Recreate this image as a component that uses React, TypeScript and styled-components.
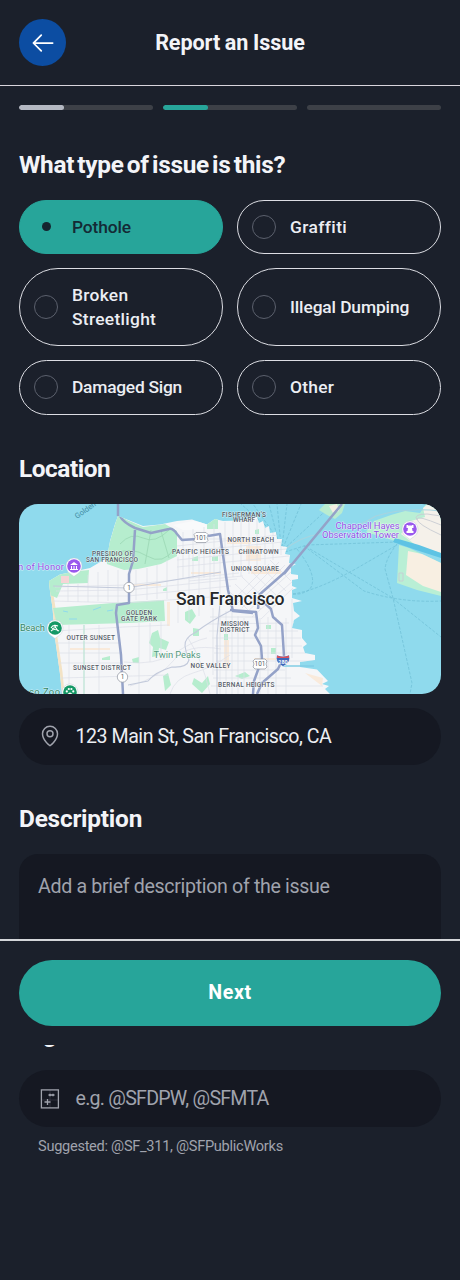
import React from "react";
import styled, { createGlobalStyle } from "styled-components";
import { PiArrowLeft, PiMapPin } from "react-icons/pi";

const Global = createGlobalStyle`
  * { box-sizing: border-box; }
  body { margin: 0; background: #1b202b; }
  button, input, textarea { font: inherit; }
`;

const Screen = styled.div`
  position: relative;
  display: flex;
  flex-direction: column;
  width: 460px;
  height: 1280px;
  overflow: hidden;
  background: #1b202b;
  color: #f3f4f8;
  font-family: Roboto, "Liberation Sans", sans-serif;
`;

const Header = styled.header`
  display: grid;
  grid-template-columns: 47px 1fr 47px;
  align-items: center;
  height: 86px;
  padding: 0 19px;
  border-bottom: 1px solid #d9d5dd;
`;

const BackButton = styled.button`
  display: grid;
  place-items: center;
  width: 47px;
  height: 47px;
  padding: 0;
  border: 0;
  border-radius: 50%;
  background: #0c4da2;
  color: #fff;
`;

const Title = styled.h1`
  margin: 0;
  text-align: center;
  font-size: 21.6px;
  line-height: 28px;
  font-weight: 700;
  letter-spacing: -0.1px;
  word-spacing: -0.5px;
`;

const Progress = styled.div`
  display: grid;
  grid-template-columns: repeat(3, 1fr);
  gap: 9.5px;
  padding: 19px 19px 0;
`;

const Track = styled.div`
  height: 5px;
  border-radius: 3px;
  background: #3d4047;
  overflow: hidden;
`;

const Fill = styled.div<{ $tone: string }>`
  width: 33.5%;
  height: 100%;
  border-radius: 3px;
  background: ${(p) => p.$tone};
`;

const Section = styled.section<{ $top: number }>`
  margin-top: ${(p) => p.$top}px;
  padding: 0 19px;
`;

const Heading = styled.h2<{ $track: number; $lift?: boolean }>`
  margin: 0;
  height: 30px;
  font-size: 24.4px;
  line-height: ${(p) => (p.$lift ? 27 : 29)}px;
  font-weight: 700;
  letter-spacing: ${(p) => p.$track}px;
  word-spacing: -2.5px;
  white-space: nowrap;
`;

const Options = styled.div`
  display: grid;
  grid-template-columns: 1fr 1fr;
  gap: 14px;
  margin-top: 19.7px;
`;

const Option = styled.label<{ $on?: boolean; $tall?: boolean }>`
  display: flex;
  align-items: center;
  gap: 14px;
  height: ${(p) => (p.$tall ? 78 : 54.5)}px;
  padding: 0 14px;
  border: 1.2px solid ${(p) => (p.$on ? "#27a59a" : "#dcdde3")};
  border-radius: 40px;
  background: ${(p) => (p.$on ? "#27a59a" : "transparent")};
  color: ${(p) => (p.$on ? "#142a35" : "#eceef3")};
`;

const Radio = styled.span<{ $on?: boolean }>`
  display: grid;
  place-items: center;
  flex: none;
  width: 24px;
  height: 24px;
  border: 1.2px solid ${(p) => (p.$on ? "transparent" : "#5b606d")};
  border-radius: 50%;
  &::after {
    content: "";
    width: 9px;
    height: 9px;
    border-radius: 50%;
    background: ${(p) => (p.$on ? "#15242f" : "transparent")};
  }
`;

const OptionText = styled.span<{ $track: number }>`
  padding-top: 1.6px;
  font-size: 17.4px;
  line-height: 23.8px;
  font-weight: 500;
  letter-spacing: ${(p) => p.$track}px;
`;

const MapFrame = styled.div`
  height: 189.5px;
  margin-top: 20px;
  border-radius: 19px;
  overflow: hidden;
  svg { display: block; }
`;

const Field = styled.div<{ $top: number }>`
  display: flex;
  align-items: center;
  gap: 13.5px;
  height: 57px;
  margin-top: ${(p) => p.$top}px;
  padding: 0 19px;
  border-radius: 29px;
  background: #151822;
`;

const FieldIcon = styled.span`
  display: grid;
  place-items: center;
  width: 24px;
  height: 24px;
  color: #a0a3ad;
`;

const FieldText = styled.span<{ $muted?: boolean; $track: number }>`
  padding-top: 1.6px;
  color: ${(p) => (p.$muted ? "#a0a3ad" : "#eceef2")};
  font-size: 19.6px;
  line-height: 26px;
  letter-spacing: ${(p) => p.$track}px;
  white-space: nowrap;
`;

const DescriptionBox = styled.div`
  height: 142px;
  margin-top: 20px;
  padding: 20px 19px;
  border-radius: 19px;
  background: #151822;
`;

const Hint = styled.p<{ $track: number }>`
  margin: 8.6px 19px 0;
  color: #a0a3ad;
  font-size: 14.6px;
  line-height: 20px;
  letter-spacing: ${(p) => p.$track}px;
  white-space: nowrap;
`;

const Footer = styled.footer`
  position: absolute;
  left: 0;
  right: 0;
  top: 939px;
  height: 106px;
  padding: 20px 19px 19px;
  border-top: 2px solid #d4d6da;
  background: #1b202b;
`;

const NextButton = styled.button`
  width: 100%;
  height: 66px;
  margin-top: -1px;
  padding: 0 0 1px;
  border: 0;
  border-radius: 33px;
  background: #27a59a;
  color: #fff;
  font-size: 19.6px;
  font-weight: 700;
  letter-spacing: 0.6px;
`;

const OPTIONS = [
  { text: "Pothole", track: -0.15, on: true },
  { text: "Graffiti", track: 0.4 },
  { text: "Broken Streetlight", track: 0.3, tall: true },
  { text: "Illegal Dumping", track: -0.12, tall: true },
  { text: "Damaged Sign", track: -0.25 },
  { text: "Other", track: 0.25 },
];

/* District labels: text, left edge, baseline, width. */
const DISTRICTS: [string, number, number, number][] = [
  ["PRESIDIO OF", 73, 52, 41],
  ["SAN FRANCISCO", 67, 58, 52],
  ["PACIFIC HEIGHTS", 153, 50, 57],
  ["FISHERMAN'S", 203, 12.5, 44],
  ["WHARF", 214, 18.3, 22],
  ["NORTH BEACH", 208.5, 37.5, 46.5],
  ["CHINATOWN", 219.5, 50, 40],
  ["UNION SQUARE", 212, 66.5, 48],
  ["GOLDEN", 107, 111, 26],
  ["GATE PARK", 102, 117, 36],
  ["OUTER SUNSET", 47.5, 136, 48.5],
  ["SUNSET DISTRICT", 54, 166, 58],
  ["NOE VALLEY", 171.5, 163.5, 40],
  ["MISSION", 202, 122, 27.5],
  ["DISTRICT", 201, 128, 29.5],
  ["BERNAL HEIGHTS", 199, 182.7, 56.5],
];

const LAND =
  "M43 190L41 170L36 134L33.5 104L31 87L30 77L41 70.5L71 64L88 54L91 37L96 20L99 12L108 15.5L124 22L141 20.5L158 17L173 15.5L188 20.5L196 15L204 17L221 16.5L234 14L238 13L240 19L244 17L246 24L250 22L251 29L257 28L258 35L263 35L262 42L268 43L266 50L271 51L270 59L277 60L272 63L272 70L279 71V75L273 76V82L278 84L273 86V94L283 97L274 99L275 107L281 112L275 116L273 124L283 126V134L288 140L284 143L286 149L296 151V156L281 158V163L298 165.5L309 177L303 180L310 182L306 185L311 190Z";

function Pin({ x, y, color, children }: { x: number; y: number; color: string; children: React.ReactNode }) {
  return (
    <g transform={`translate(${x} ${y})`}>
      <path d="M0 10.5C-2 8.5-8 6.5-8 0A8 8 0 0 1 8 0C8 6.5 2 8.5 0 10.5Z" fill="#fff" stroke="#b9bfcc" strokeWidth=".4" />
      <circle r="6.8" fill={color} />
      {children}
    </g>
  );
}

function CityMap() {
  return (
    <svg width="422" height="189.5" viewBox="0 0 422 189.5" fontFamily="Roboto, sans-serif">
      <defs>
        <clipPath id="land"><path d={LAND} /></clipPath>
      </defs>
      <rect width="422" height="190" fill="#8fdaed" />

      {/* ferry routes */}
      <g fill="none" stroke="#6fbfd6" strokeWidth=".7" strokeDasharray="3 1.6">
        <path d="M260 40L250 0M262 42L258 0M263 43L268 0M264 44L282 0M264 46L314 0M255 30L234 0M247 22L222 0" />
        <path d="M266 48L288 41L378 38M285 42L345 87Q382 99 422 97M291 45L372 93L422 133M274 90Q300 86 340 63L378 41M278 45Q301 74 290 86Q282 91 274 90M378 40Q367 54 366 65L374 94L393 179L391 190" />
      </g>

      {/* Yerba Buena and Treasure islands, east shore */}
      <path d="M300 6L306 0H326L323 9L316 15L308 11Z" fill="#b9ecd0" />
      <path d="M310 2L318 0L320 7L314 9Z" fill="#f3eee2" />
      <path d="M355 17L372 11L386 7L401 9L407 0H422V50L397 43L376 37L347 28Z" fill="#b9efd5" />
      <path d="M382 30L392 17L406 13L404 4L409 0H422V49L398 42Z" fill="#f5f1ea" />
      <path d="M380 41L390 44L422 59V92L398 86L378 79Z" fill="#b9efd5" />
      <path d="M389 47L403 50L422 59V88L404 82L387 71Z" fill="#f8efe2" />
      <path d="M376 34L400 41L422 49V54L397 46L374 38Z" fill="#5ec3e4" />
      <path d="M422 21Q398 11 398 15Q398 20 422 31M422 12L408 10Q394 10 398 16M380 69h4v8h-4z" fill="none" stroke="#c8ccd2" strokeWidth=".9" />
      <path d="M264 47Q282 32 302 30Q331 28 357 12Q386 3 422 7" fill="none" stroke="#a8d4df" strokeWidth="1.2" />

      <path d={LAND} fill="#f5f6f8" />
      <g clipPath="url(#land)">
        {/* beach */}
        <path d="M30 78L34 104L36 134L41 168L43 190" fill="none" stroke="#f3e3c5" strokeWidth="5" />

        {/* parks */}
        <g fill="#b6edce">
          <path d="M99 10L108 16L124 23L146 20L158 27V52L142 60L119 65L105 66L88 60L87 52L91 37Z" />
          <path d="M28 76L40 69L70 66L69 79L44 80L38 94L31 91Z" />
          <path d="M34 104L94 99L145 96L146 117L110 119L38 121Z" />
          <path d="M133 129l6-3 2 8 9 4-3 8-7-2-1 8-6 1 1-10-4-4zM166 108l7-3 4 7-6 8-5-4zM144 172l5-3 3 12-6 6zM174 124l6 1v7h-6zM144 85l4-2v4h-4zM83 154l8-2v4h-8zM113 155l7-2v6h-6zM216 172l10-4 5 4-8 3zM247 121h5v4h-5zM252 144h5v6h-5zM236 26l4-1v5h-4zM205 130h4v7h-4zM173 54l6-2v5h-6zM193 53l6-1v5h-6zM175 174l8 5 6-7 2 8-8 9-10-9z" />
          <path d="M188 14h11v11h-11z" />
        </g>
        <path d="M101 40Q112 28 124 34T150 26M96 50Q112 42 128 52T156 44M132 26L126 60M142 27L150 54" fill="none" stroke="#9bd7b4" strokeWidth=".8" />
        <path d="M44 107l5 1M74 106l8-3M88 107l6-1M50 115h8" fill="none" stroke="#8fdaed" strokeWidth="1" />
        <path d="M42 72h8v7h-8z" fill="#f5d5d6" />
        <path d="M154 21L174 17L188 19V26H164Z" fill="#f9fafb" />

        {/* warm commercial blocks */}
        <g fill="#f9eadb">
          <path d="M208 36h24v4h-24zM227 42h15v15h-15zM232 65h30v5h-30zM205 136h5v29h-5zM112 80h30v2h-30zM148 98h3v24h-3zM51 144h40v2H51zM274 118h7v6h-7zM286 169l18 5-1 8zM172 68h30v2h-30zM235 154h30v2h-30z" />
        </g>

        {/* minor streets */}
        <g fill="none" stroke="#dcdfe8" strokeWidth=".7">
          <path d="M36 83L108 81L220 69M37 87L109 86L218 75M39 92L109 92L212 82M34 97L107 99L220 91" />
          <path d="M49 80V98M59 80V98M69 71V98M79 68V97M89 66V97M99 66V98M117 66V96M128 64V96M138 61V95M148 56V95M159 53V119M170 49V117M180 47V112M191 44V102M201 42V101" />
          <path d="M36 127L105 123L150 121M37 139H102M39 149H102M41 159H103M42 174L150 171M50 121V190M80 121V190M120 119V190M131 119V158M142 118V150" />
          <path d="M160 35H207M158 42L260 31M158 48L264 38M158 56L267 45M158 63L270 52M170 77L224 72M164 28V74M174 25V74M185 23V74M195 20V73M206 18V74M214 17V73M222 16V72M230 15V70M238 15V67M246 23V61M254 29V56M262 38V51" />
          <path d="M214 96L250 60M218 100L260 58M223 104L266 61M228 108L272 68M233 113L274 77M242 115L274 84M210 87L233 110M216 80L242 105M223 73L250 99M232 67L258 92M241 62L267 87M251 56L272 77" />
          <path d="M194 104V171M201 105V190M207 107V190M213 108V190M219 112V190M225 114V190M241 114V190M249 113V190M257 113V190M267 114V190M273 95V154M191 113H238M189 120L270 119M190 127H279M193 134H282M196 142H283M195 149H287M197 157H295M195 166H266M194 174H272M192 182H304" />
          <path d="M105 158Q136 162 156 149T188 134M111 182Q142 173 155 156T202 145M151 190Q156 174 174 169T211 151M169 134Q184 157 191 190" />
        </g>
        <g fill="none" stroke="#c3cadb" strokeWidth="1.1">
          <path d="M34 82L108 84L202 68" />
          <path d="M211 107Q190 118 177 128Q165 134 166 142T170 156Q168 164 153 163Q136 168 129 177L109 181M201 99L198 132V190" />
        </g>
        <path d="M65 121V190" fill="none" stroke="#c2e6d8" strokeWidth="1.4" />

        {/* highways */}
        <g fill="none" stroke="#94a2c8" strokeWidth="2.5" strokeLinejoin="round">
          <path d="M99 0L100 10Q103 18 116 24L132 29L150 25Q154 24 158 30L163 36L178 35M189 32L201 30L209 86L214 107L234 109" />
          <path d="M116 26L114 57L110 70V99L98 101L97 109L102 151L104 190" />
          <path d="M240 91L265 69L323 0" />
          <path d="M211 106L237 108L239 124L236 131L242 142L243 155L235 177L234 190" />
          <path d="M239 105L240 94L252 105L254 113L263 121L265 152L259 165L243 179L238 190" />
        </g>
      </g>
      <path d="M99 0V12M265 70L323 0" fill="none" stroke="#94a2c8" strokeWidth="2.5" />
      <path d="M264 162H295" stroke="#80cde5" strokeWidth="1.7" />

      {/* route shields */}
      <g fill="#fff" stroke="#8e949f" strokeWidth=".7">
        <circle cx="110" cy="83.5" r="5.2" />
        <circle cx="103.5" cy="173" r="5.2" />
        <path d="M177 28.5h10l2 2-1 3 1 3-2 2h-10l-2-2 1-3-1-3z" />
        <path d="M236 155h10l2 2-1 3 1 3-2 2h-10l-2-2 1-3-1-3z" />
      </g>
      <path d="M258 151Q264 154 270 151Q273 158 264 162.5Q255 158 258 151Z" fill="#3c67ba" stroke="#fff" strokeWidth=".5" />
      <path d="M258 151.5Q264 154 270 151.5V154H258Z" fill="#d9525e" />
      <g fontSize="6.4" fill="#535963" textAnchor="middle">
        <text x="110" y="85.8">1</text>
        <text x="103.5" y="175.3">1</text>
        <text x="182" y="35.8">101</text>
        <text x="241" y="162.3">101</text>
        <text x="264" y="159.5" fill="#fff" fontSize="5.4" fontWeight="700">280</text>
      </g>

      <g fontSize="6.5" fontWeight="500" fill="#565c67" stroke="#fff" strokeWidth="1" strokeOpacity=".6" paintOrder="stroke" strokeLinejoin="round">
        {DISTRICTS.map(([label, x, y, width]) => (
          <text key={label} x={x} y={y} textLength={width}>{label}</text>
        ))}
      </g>

      <text x="157" y="101" textLength="108.5" fontSize="17.6" fontWeight="500" fill="#25282c" stroke="#fff" strokeWidth="1.2" paintOrder="stroke">San Francisco</text>

      <g fontSize="9.4" stroke="#fff" strokeWidth="1.2" strokeOpacity=".6" paintOrder="stroke" strokeLinejoin="round">
        <text x="134.5" y="153.5" textLength="47" fill="#559a7e">Twin Peaks</text>
        <text x="-1" y="65.5" textLength="46" fill="#9650e8">n of Honor</text>
        <text x="1" y="127" textLength="25" fill="#338766">Beach</text>
        <text x="10" y="191" textLength="31" fill="#338766">co Zoo</text>
        <text x="316.5" y="24.5" textLength="64" fill="#9650e8">Chappell Hayes</text>
        <text x="303" y="33.7" textLength="77" fill="#9650e8">Observation Tower</text>
      </g>
      <text transform="translate(58 15) rotate(-35)" fontSize="7.6" fill="#438ea5">Golden</text>

      <Pin x={55} y={62} color="#9a58ed">
        <path d="M-4-1L0-4L4-1ZM-3 0h1v3h-1zM-.5 0h1v3h-1zM2 0h1v3h-1zM-4 3h8v1h-8z" fill="#fff" />
      </Pin>
      <Pin x={36} y={124} color="#159866">
        <path d="M-4 0Q-2-4 3-2M-1-3L3 3M-4 3Q-1 0 4 3M-3 1L1-1" fill="none" stroke="#fff" strokeWidth="1.1" />
      </Pin>
      <Pin x={51} y={188} color="#159866">
        <path d="M-3 3Q0-2 3 3Z" fill="#fff" />
        <circle cx="-3.2" cy="-.6" r="1.1" fill="#fff" />
        <circle cx="-1.2" cy="-3" r="1.1" fill="#fff" />
        <circle cx="1.4" cy="-3" r="1.1" fill="#fff" />
        <circle cx="3.3" cy="-.6" r="1.1" fill="#fff" />
      </Pin>
      <Pin x={391} y={25} color="#9a58ed">
        <path d="M-3.5-4h2v1h1v-1h1v1h1v-1h2v3h-1.5l.5 3h1v2h-7v-2h1l.5-3h-1.5z" fill="#fff" />
      </Pin>
    </svg>
  );
}

function HandleIcon() {
  return (
    <svg width="24" height="24" viewBox="0 0 24 24" fill="none" stroke="currentColor">
      <rect x="3.4" y="2.9" width="17" height="18" strokeWidth="1.3" />
      <path d="M12 3V21M4 13H20" strokeWidth=".5" opacity=".35" />
      <path d="M6.5 15h6M9.5 12v6M10.500 8h6M12 6.800v2.400M15 6.800v2.400" strokeWidth="1.3" />
    </svg>
  );
}

export default function App() {
  return (
    <Screen>
      <Global />
      <Header>
        <BackButton aria-label="Back"><PiArrowLeft size={28} /></BackButton>
        <Title>Report an Issue</Title>
      </Header>

      <Progress>
        <Track><Fill $tone="#b4b8c2" /></Track>
        <Track><Fill $tone="#27a59a" /></Track>
        <Track />
      </Progress>

      <Section $top={40}>
        <Heading $track={-0.3}>What type of issue is this?</Heading>
        <Options>
          {OPTIONS.map((o) => (
            <Option key={o.text} $on={o.on} $tall={o.tall}>
              <Radio $on={o.on} />
              <OptionText $track={o.track}>{o.text}</OptionText>
            </Option>
          ))}
        </Options>
      </Section>

      <Section $top={39.6}>
        <Heading $track={-0.45}>Location</Heading>
        <MapFrame><CityMap /></MapFrame>
        <Field $top={14}>
          <FieldIcon><PiMapPin size={24} /></FieldIcon>
          <FieldText $track={-0.47}>123 Main St, San Francisco, CA</FieldText>
        </Field>
      </Section>

      <Section $top={39.2}>
        <Heading $track={-0.22}>Description</Heading>
        <DescriptionBox>
          <FieldText $muted $track={-0.33}>Add a brief description of the issue</FieldText>
        </DescriptionBox>
      </Section>

      <Section $top={24.2}>
        <Heading $track={-1.2} $lift>Tag Officials</Heading>
        <Field $top={20}>
          <FieldIcon><HandleIcon /></FieldIcon>
          <FieldText $muted $track={-0.75}>e.g. @SFDPW, @SFMTA</FieldText>
        </Field>
        <Hint $track={-0.29}>Suggested: @SF_311, @SFPublicWorks</Hint>
      </Section>

      <Footer>
        <NextButton>Next</NextButton>
      </Footer>
    </Screen>
  );
}
